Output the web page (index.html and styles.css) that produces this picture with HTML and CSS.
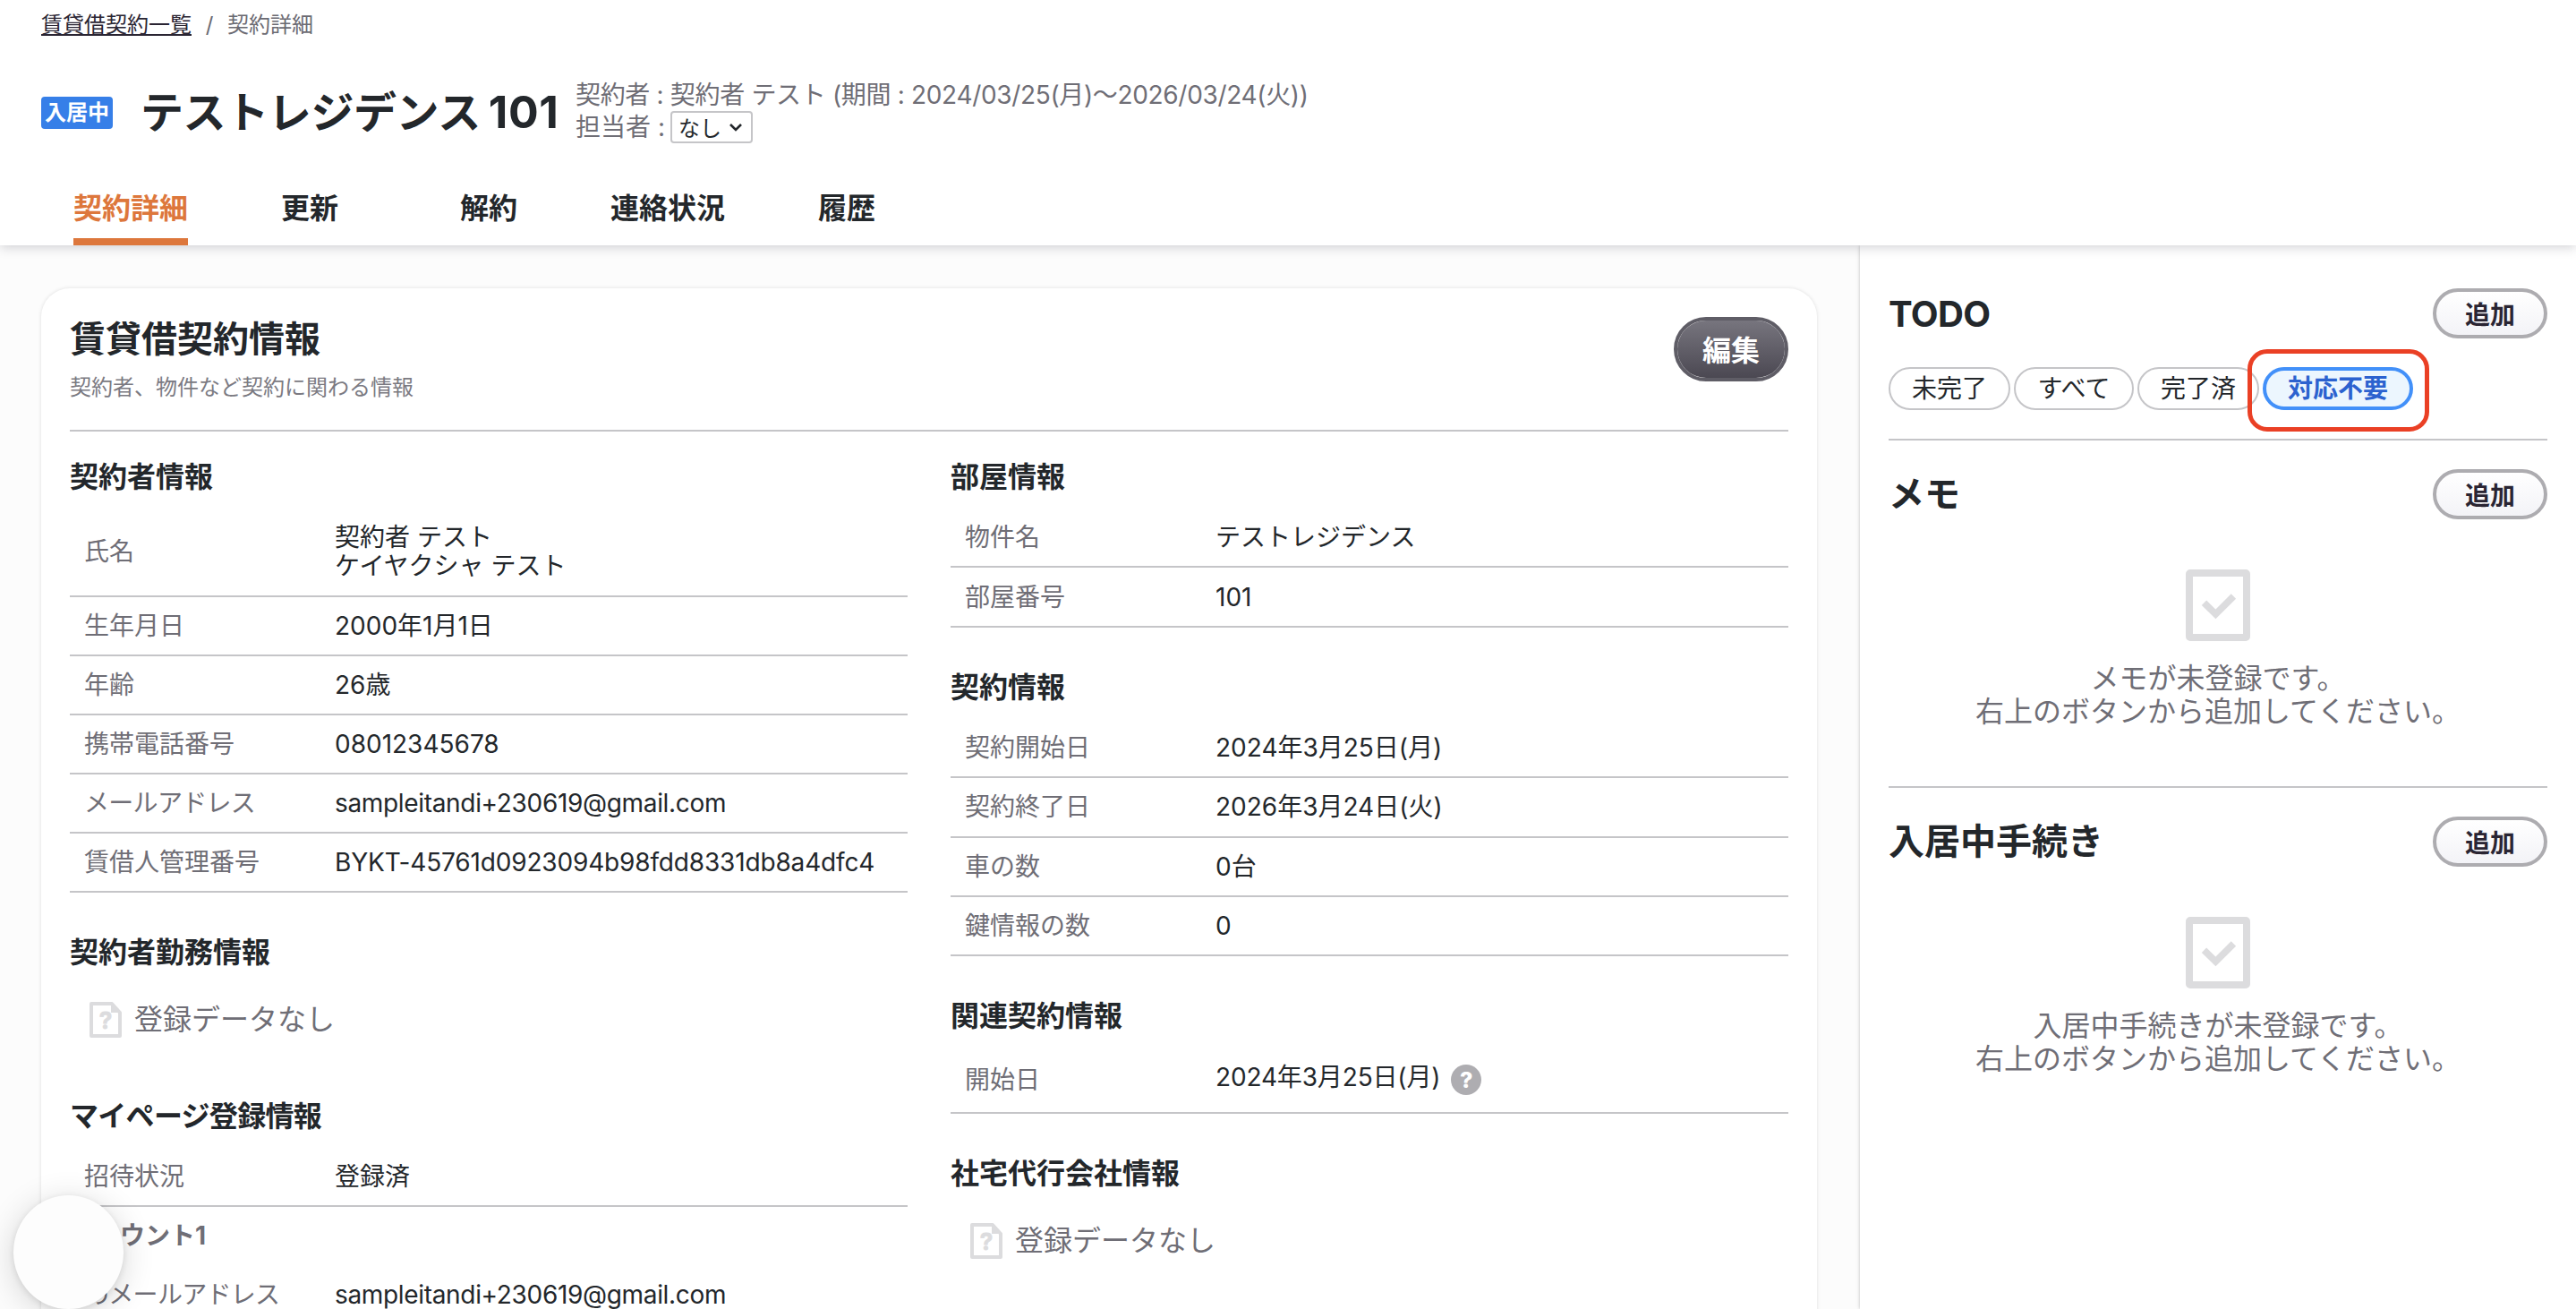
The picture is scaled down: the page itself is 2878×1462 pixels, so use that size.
FILE: index.html
```html
<!DOCTYPE html>
<html lang="ja">
<head>
    <meta charset="UTF-8">
    <meta name="viewport" content="width=device-width, initial-scale=1.0">
    <title>契約詳細</title>
    <link rel="stylesheet" href="styles.css">
</head>
<body>
    <header class="header">
        <nav class="breadcrumb">
            <a href="#">賃貸借契約一覧</a>
            <span class="slash">/</span>
            <span>契約詳細</span>
        </nav>
        <div class="title-row">
            <span class="badge">入居中</span>
            <h1>テストレジデンス<span class="room-no">101</span></h1>
            <div class="meta">
                <div class="period">契約者 : 契約者 テスト (期間 : 2024/03/25(月)〜2026/03/24(火))</div>
                <div class="staff">担当者 :
                    <button class="select">なし
                        <svg width="16" height="12" viewBox="0 0 16 12"><path d="M2 3l6 6 6-6" fill="none" stroke="#23272b" stroke-width="2.6"/></svg>
                    </button>
                </div>
            </div>
        </div>
        <nav class="tabs">
            <a class="tab active" href="#"><span>契約詳細</span></a>
            <a class="tab" href="#"><span>更新</span></a>
            <a class="tab" href="#"><span>解約</span></a>
            <a class="tab" href="#"><span>連絡状況</span></a>
            <a class="tab" href="#"><span>履歴</span></a>
        </nav>
    </header>

    <div class="content">
        <main class="main">
            <div class="card">
                <div class="card-head">
                    <div>
                        <h2>賃貸借契約情報</h2>
                        <p class="sub">契約者、物件など契約に関わる情報</p>
                    </div>
                    <button class="edit">編集</button>
                </div>
                <div class="columns">
                    <div class="column">
                        <section class="block">
                            <h3>契約者情報</h3>
                            <dl class="row tall"><dt>氏名</dt><dd>契約者 テスト<br>ケイヤクシャ テスト</dd></dl>
                            <dl class="row"><dt>生年月日</dt><dd>2000年1月1日</dd></dl>
                            <dl class="row"><dt>年齢</dt><dd>26歳</dd></dl>
                            <dl class="row"><dt>携帯電話番号</dt><dd>08012345678</dd></dl>
                            <dl class="row"><dt class="kana">メールアドレス</dt><dd class="mail">sampleitandi+230619@gmail.com</dd></dl>
                            <dl class="row"><dt>賃借人管理番号</dt><dd class="code">BYKT-45761d0923094b98fdd8331db8a4dfc4</dd></dl>
                        </section>
                        <section class="block">
                            <h3>契約者勤務情報</h3>
                            <div class="no-data">
                                <svg class="doc" width="36" height="40" viewBox="0 0 36 40"><path d="M2 2h23l9 10v26H2z" fill="none" stroke="#dcdcde" stroke-width="4" stroke-linejoin="round"/><path d="M24 1v11h11z" fill="#dcdcde"/><text x="18" y="30" text-anchor="middle">?</text></svg>
                                登録データなし
                            </div>
                        </section>
                        <section class="block">
                            <h3 class="kana">マイページ登録情報</h3>
                            <dl class="row"><dt>招待状況</dt><dd>登録済</dd></dl>
                            <h4>アカウント1</h4>
                            <dl class="row"><dt class="kana">のメールアドレス</dt><dd class="mail">sampleitandi+230619@gmail.com</dd></dl>
                        </section>
                    </div>
                    <div class="column right">
                        <section class="block">
                            <h3>部屋情報</h3>
                            <dl class="row"><dt>物件名</dt><dd>テストレジデンス</dd></dl>
                            <dl class="row"><dt>部屋番号</dt><dd>101</dd></dl>
                        </section>
                        <section class="block">
                            <h3>契約情報</h3>
                            <dl class="row"><dt>契約開始日</dt><dd>2024年3月25日(月)</dd></dl>
                            <dl class="row"><dt>契約終了日</dt><dd>2026年3月24日(火)</dd></dl>
                            <dl class="row"><dt>車の数</dt><dd>0台</dd></dl>
                            <dl class="row"><dt>鍵情報の数</dt><dd>0</dd></dl>
                        </section>
                        <section class="block">
                            <h3>関連契約情報</h3>
                            <dl class="row related"><dt>開始日</dt><dd><span class="date">2024年3月25日(月)</span><span class="help">?</span></dd></dl>
                        </section>
                        <section class="block">
                            <h3>社宅代行会社情報</h3>
                            <div class="no-data">
                                <svg class="doc" width="36" height="40" viewBox="0 0 36 40"><path d="M2 2h23l9 10v26H2z" fill="none" stroke="#dcdcde" stroke-width="4" stroke-linejoin="round"/><path d="M24 1v11h11z" fill="#dcdcde"/><text x="18" y="30" text-anchor="middle">?</text></svg>
                                登録データなし
                            </div>
                        </section>
                    </div>
                </div>
            </div>
        </main>

        <aside class="side">
            <section class="panel todo">
                <div class="panel-head"><h2 class="latin">TODO</h2><button class="add">追加</button></div>
                <div class="chips">
                    <button class="chip">未完了</button>
                    <button class="chip narrow">すべて</button>
                    <button class="chip">完了済</button>
                    <button class="chip selected">対応不要<span class="marker"></span></button>
                </div>
            </section>
            <section class="panel">
                <div class="panel-head"><h2>メモ</h2><button class="add">追加</button></div>
                <div class="empty">
                    <svg width="72" height="80" viewBox="0 0 72 80"><rect x="4" y="4" width="64" height="72" rx="1" fill="none" stroke="#dcdcde" stroke-width="8"/><path d="M20.5 37.3l12.9 12.7 20-20" fill="none" stroke="#dcdcde" stroke-width="7.6"/></svg>
                    <p>メモが未登録です。<br>右上のボタンから追加してください。</p>
                </div>
            </section>
            <section class="panel last">
                <div class="panel-head"><h2>入居中手続き</h2><button class="add">追加</button></div>
                <div class="empty">
                    <svg width="72" height="80" viewBox="0 0 72 80"><rect x="4" y="4" width="64" height="72" rx="1" fill="none" stroke="#dcdcde" stroke-width="8"/><path d="M20.5 37.3l12.9 12.7 20-20" fill="none" stroke="#dcdcde" stroke-width="7.6"/></svg>
                    <p>入居中手続きが未登録です。<br>右上のボタンから追加してください。</p>
                </div>
            </section>
        </aside>
    </div>

    <div class="fab"></div>
</body>
</html>
```

FILE: styles.css
```css
* {
    box-sizing: border-box;
}

body {
    display: flex;
    flex-direction: column;
    height: 100vh;
    margin: 0;
    overflow: hidden;
    background-color: #fcfcfc;
    color: #23272b;
    font-family: Inter, "Noto Sans CJK JP", sans-serif;
    font-size: 28px;
    line-height: 32px;
}

h1, h2, h3, h4, p, dl, dd {
    margin: 0;
}

a {
    color: inherit;
    text-decoration: none;
}

button {
    padding: 0;
    font-family: inherit;
    white-space: nowrap;
}

/* header */
.header {
    position: relative;
    z-index: 2;
    flex: none;
    height: 274px;
    padding: 10px 46px 0;
    background-color: #fff;
    box-shadow: 0 2px 12px rgba(40, 40, 60, 0.22);
}

.breadcrumb {
    display: flex;
    height: 34px;
    line-height: 35px;
    font-size: 24px;
    color: #6b6a72;
}

.breadcrumb a {
    color: #2a2533;
    border-bottom: 2px solid #2a2533;
    height: 30px;
}

.slash {
    width: 40px;
    text-align: center;
}

.title-row {
    display: flex;
    height: 148px;
    padding-top: 44px;
}

.badge {
    width: 80px;
    height: 36px;
    margin-top: 20px;
    border-radius: 4px;
    background-color: #367fe8;
    color: #fff;
    font-size: 24px;
    font-weight: 700;
    line-height: 35px;
    text-align: center;
}

h1 {
    width: 486px;
    margin-left: 31px;
    padding-top: 12px;
    font-size: 48px;
    line-height: 50px;
    letter-spacing: -0.4px;
    white-space: nowrap;
}

.room-no {
    margin-left: 9px;
    font-size: 50px;
    letter-spacing: 0.6px;
}

.meta {
    color: #6f6e76;
    line-height: 36px;
    white-space: nowrap;
}

.period {
    letter-spacing: -0.33px;
}

.staff {
    display: flex;
    gap: 6px;
}

.select {
    display: flex;
    align-items: center;
    justify-content: space-between;
    width: 92px;
    height: 36px;
    padding: 0 9px 1px 7px;
    border: 2px solid #c5c5c8;
    border-radius: 4px;
    background-color: #fff;
    color: #23272b;
    font-size: 24px;
}

.tabs {
    display: flex;
}

.tab {
    width: 200px;
    height: 82px;
    text-align: center;
    font-size: 32px;
    font-weight: 700;
    line-height: 82px;
}

.tab span {
    display: inline-block;
    height: 82px;
}

.active {
    color: #dd773c;
}

.active span {
    border-bottom: 8px solid #dd773c;
}

/* content */
.content {
    display: flex;
    flex: 1;
    min-height: 0;
}

.main {
    width: 2078px;
    padding: 48px 48px 0 46px;
    overflow: hidden;
}

.card {
    height: 1300px;
    padding: 32px;
    border-radius: 32px;
    background-color: #fff;
    box-shadow: 0 0 4px rgba(0, 0, 0, 0.12);
}

.card-head {
    display: flex;
    justify-content: space-between;
    height: 128px;
    border-bottom: 2px solid #c5c5c8;
}

h2 {
    font-size: 40px;
    line-height: 50px;
}

.latin {
    padding-top: 2px;
    letter-spacing: -0.6px;
}

.sub {
    margin-top: 12px;
    color: #7b7a82;
    font-size: 24px;
    line-height: 34px;
}

.edit {
    width: 128px;
    height: 72px;
    padding-bottom: 3px;
    border: 4px solid #5f5d66;
    border-radius: 36px;
    background: linear-gradient(to bottom, #77757e, #4b4852);
    background-clip: padding-box;
    color: #fff;
    font-size: 32px;
    font-weight: 700;
}

.columns {
    display: flex;
    gap: 48px;
    padding-top: 31px;
}

.column {
    width: 936px;
}

.block {
    margin-bottom: 47px;
}

h3 {
    height: 55px;
    font-size: 32px;
    line-height: 40px;
}

.row {
    display: flex;
    align-items: center;
    height: 66px;
    padding-left: 16px;
    border-bottom: 2px solid #c5c5c8;
}

.right .row {
    height: 66.4px;
}

.tall {
    height: 99px;
    padding-bottom: 1px;
}

.row dt {
    width: 280px;
    color: #6f6e76;
    white-space: nowrap;
}

.row dd {
    white-space: nowrap;
}

.kana {
    letter-spacing: -0.7px;
}

.mail {
    letter-spacing: -0.33px;
}

.code {
    letter-spacing: -0.16px;
}

.right .related {
    height: 74px;
}

.related dd {
    display: flex;
    align-items: center;
    gap: 12px;
}

.date {
    padding-bottom: 7px;
    letter-spacing: -0.15px;
}

.help {
    width: 34px;
    height: 34px;
    border-radius: 50%;
    background-color: #aeadb1;
    color: #fff;
    font-size: 25px;
    font-weight: 800;
    line-height: 34px;
    text-align: center;
}

.no-data {
    display: flex;
    align-items: center;
    gap: 14px;
    height: 81px;
    padding-bottom: 2px;
    padding-left: 22px;
    color: #6f6e76;
    font-size: 32px;
}

.doc text {
    fill: #dcdcde;
    stroke: #dcdcde;
    stroke-width: 0.8px;
    font-size: 26px;
    font-weight: 700;
}

h4 {
    height: 66px;
    color: #6f6e76;
    font-size: 28px;
    line-height: 64px;
}

/* side */
.side {
    flex: 1;
    padding: 0 32px;
    background-color: #fff;
    box-shadow: 0 0 4px rgba(0, 0, 0, 0.25);
}

.panel {
    height: 388px;
    padding-top: 32px;
    border-bottom: 2px solid #c5c5c8;
}

.todo {
    height: 218px;
    padding-top: 48px;
}

.last {
    border-bottom: none;
}

.panel-head {
    display: flex;
    align-items: center;
    justify-content: space-between;
    height: 56px;
}

.add {
    width: 128px;
    height: 56px;
    padding-bottom: 1px;
    border: 4px solid #adacb0;
    border-radius: 28px;
    background: linear-gradient(to bottom, #fff, #f3f3f7);
    color: #2a2533;
    font-size: 28px;
    font-weight: 700;
}

.chips {
    display: flex;
    gap: 4px;
    margin-top: 32px;
}

.chip {
    position: relative;
    width: 136px;
    height: 48px;
    border: 2px solid #c5c5c8;
    border-radius: 24px;
    background-color: #fff;
    color: #23272b;
    font-size: 28px;
    line-height: 40px;
}

.narrow {
    width: 134px;
}

.selected {
    width: 168px;
    border: 4px solid #4290f9;
    background-color: #ecf6fe;
    color: #2c62cf;
    font-weight: 700;
}

/* red frame around the selected chip */
.marker {
    position: absolute;
    top: -24px;
    left: -21px;
    width: 203px;
    height: 92px;
    border: 5px solid #ea4025;
    border-radius: 22px;
}

.empty {
    padding-top: 56px;
    color: #6f6e76;
    font-size: 32px;
    line-height: 37px;
    text-align: center;
}

.empty svg {
    display: block;
    margin: 0 auto 23px;
}

/* floating button */
.fab {
    position: fixed;
    z-index: 3;
    left: 15px;
    bottom: 0;
    width: 123px;
    height: 127px;
    border-radius: 50%;
    background-color: #fdfdfd;
    box-shadow: 0 6px 36px rgba(0, 0, 0, 0.16), 0 2px 8px rgba(0, 0, 0, 0.1);
}
```
